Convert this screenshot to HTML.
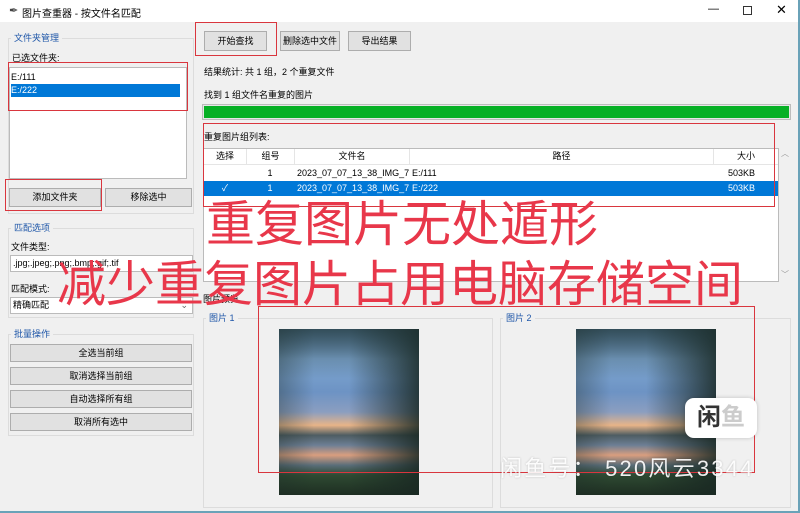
<!DOCTYPE html>
<html><head><meta charset="utf-8"><style>
*{box-sizing:border-box;margin:0;padding:0}
body{width:800px;height:513px;overflow:hidden;background:#f0f0f0;font-family:"Liberation Sans","Noto Sans CJK SC",sans-serif;font-size:9px;color:#000;position:relative}
.a{position:absolute}
.btn{position:absolute;background:#e1e1e1;border:1px solid #adadad;text-align:center;font-size:9px;line-height:17px}
.grp{position:absolute;border:1px solid #dcdcdc}
.lbl{position:absolute;color:#1e56a8;font-size:9px;background:#f0f0f0;padding:0 3px}
.red{position:absolute;border:1.5px solid #d9363e}
.img{position:absolute;width:140px;height:166px;background:
linear-gradient(180deg,#4c6f8a 0%,#7fa8d2 18%,#6d93c4 38%,#8b9ec0 50%,#e8b488 58%,#4e5d62 64%,#6d7f95 70%,#d99e7f 76%,#5b6e7a 82%,#2e4a32 88%,#1e2e22 100%);overflow:hidden}
.img:before{content:"";position:absolute;left:0;top:0;width:140px;height:166px;background:linear-gradient(90deg,rgba(30,45,40,0.35) 0%,rgba(30,45,40,0) 25%,rgba(30,45,40,0) 50%,rgba(25,40,35,0.85) 100%);}
.img:after{content:"";position:absolute;left:0;top:0;width:140px;height:166px;background:linear-gradient(180deg,rgba(30,50,50,.55) 0%,rgba(30,50,50,0) 30%)}
.big{position:absolute;color:#e8374a;font-size:49px;line-height:52px;white-space:nowrap;font-family:"Noto Sans CJK SC",sans-serif}
</style></head><body>
<div class="a" style="left:0;top:0;width:800px;height:22px;background:#fff"></div>
<div class="a" style="left:9px;top:4px;font-size:11px;color:#444">✒</div>
<div class="a" style="left:22px;top:5px;font-size:10px">图片查重器 - 按文件名匹配</div>
<div class="a" style="left:708px;top:3px;font-size:11px">—</div>
<div class="a" style="left:743px;top:6px;width:9px;height:9px;border:1px solid #333"></div>
<div class="a" style="left:776px;top:2px;font-size:13px">✕</div>
<div class="a" style="left:798px;top:0;width:2px;height:513px;background:#6aa2b8"></div>
<div class="a" style="left:0;top:511px;width:800px;height:2px;background:#6aa2b8"></div>

<div class="grp" style="left:8px;top:38px;width:186px;height:176px"></div>
<div class="lbl" style="left:11px;top:31px">文件夹管理</div>
<div class="a" style="left:12px;top:51px">已选文件夹:</div>
<div class="a" style="left:9px;top:67px;width:178px;height:112px;background:#fff;border:1px solid #bbb"></div>
<div class="a" style="left:11px;top:72px;font-size:9px">E:/111</div>
<div class="a" style="left:11px;top:84px;width:169px;height:13px;background:#0078d7;color:#fff;line-height:12px">E:/222</div>
<div class="btn" style="left:9px;top:188px;width:92px;height:19px">添加文件夹</div>
<div class="btn" style="left:105px;top:188px;width:87px;height:19px">移除选中</div>
<div class="red" style="left:8px;top:62px;width:180px;height:49px"></div>
<div class="red" style="left:5px;top:179px;width:97px;height:32px"></div>

<div class="grp" style="left:8px;top:228px;width:186px;height:90px"></div>
<div class="lbl" style="left:11px;top:221px">匹配选项</div>
<div class="a" style="left:11px;top:240px">文件类型:</div>
<div class="a" style="left:10px;top:255px;width:183px;height:17px;background:#fff;border:1px solid #bbb;line-height:15px;padding-left:2px">.jpg;.jpeg;.png;.bmp;.gif;.tif</div>
<div class="a" style="left:11px;top:282px">匹配模式:</div>
<div class="a" style="left:10px;top:297px;width:183px;height:17px;background:#fff;border:1px solid #bbb;line-height:15px;padding-left:2px">精确匹配<span style="position:absolute;right:4px;color:#666">⌄</span></div>

<div class="grp" style="left:8px;top:334px;width:186px;height:102px"></div>
<div class="lbl" style="left:11px;top:327px">批量操作</div>
<div class="btn" style="left:10px;top:344px;width:182px;height:18px">全选当前组</div>
<div class="btn" style="left:10px;top:367px;width:182px;height:18px">取消选择当前组</div>
<div class="btn" style="left:10px;top:390px;width:182px;height:18px">自动选择所有组</div>
<div class="btn" style="left:10px;top:413px;width:182px;height:18px">取消所有选中</div>

<div class="btn" style="left:204px;top:31px;width:63px;height:20px;line-height:18px">开始查找</div>
<div class="btn" style="left:280px;top:31px;width:60px;height:20px;line-height:18px">删除选中文件</div>
<div class="btn" style="left:348px;top:31px;width:63px;height:20px;line-height:18px">导出结果</div>
<div class="red" style="left:195px;top:22px;width:82px;height:34px"></div>
<div class="a" style="left:204px;top:65px">结果统计: 共 1 组，2 个重复文件</div>
<div class="a" style="left:204px;top:88px">找到 1 组文件名重复的图片</div>
<div class="a" style="left:202px;top:104px;width:589px;height:16px;background:#e6e6e6;border:1px solid #bcbcbc"></div>
<div class="a" style="left:204px;top:106px;width:585px;height:12px;background:#06b025"></div>
<div class="a" style="left:204px;top:130px">重复图片组列表:</div>

<div class="a" style="left:203px;top:148px;width:576px;height:134px;background:#fff;border:1px solid #bbb"></div>
<div class="a" style="left:779px;top:148px;width:12px;height:134px;background:#f0f0f0;color:#999;font-size:8px;text-align:center">︿<div style="position:absolute;bottom:2px;width:12px">﹀</div></div>
<div class="a" style="left:204px;top:149px;width:574px;height:16px;border-bottom:1px solid #e5e5e5;line-height:15px">
<span class="a" style="left:0;width:42px;text-align:center">选择</span>
<span class="a" style="left:42px;width:48px;text-align:center;border-left:1px solid #e5e5e5">组号</span>
<span class="a" style="left:90px;width:115px;text-align:center;border-left:1px solid #e5e5e5">文件名</span>
<span class="a" style="left:205px;width:304px;text-align:center;border-left:1px solid #e5e5e5">路径</span>
<span class="a" style="left:509px;width:65px;text-align:center;border-left:1px solid #e5e5e5">大小</span>
</div>
<div class="a" style="left:204px;top:166px;width:574px;height:15px;line-height:15px">
<span class="a" style="left:42px;width:48px;text-align:center">1</span>
<span class="a" style="left:93px">2023_07_07_13_38_IMG_7</span>
<span class="a" style="left:208px">E:/111</span>
<span class="a" style="left:524px">503KB</span></div>
<div class="a" style="left:204px;top:181px;width:574px;height:15px;line-height:15px;background:#0078d7;color:#fff">
<span class="a" style="left:0;width:42px;text-align:center">✓</span>
<span class="a" style="left:42px;width:48px;text-align:center">1</span>
<span class="a" style="left:93px">2023_07_07_13_38_IMG_7</span>
<span class="a" style="left:208px">E:/222</span>
<span class="a" style="left:524px">503KB</span></div>
<div class="red" style="left:203px;top:123px;width:572px;height:84px"></div>

<div class="a" style="left:203px;top:292px">图片预览</div>
<div class="grp" style="left:203px;top:318px;width:290px;height:190px"></div>
<div class="lbl" style="left:206px;top:311px">图片 1</div>
<div class="grp" style="left:500px;top:318px;width:291px;height:190px"></div>
<div class="lbl" style="left:503px;top:311px">图片 2</div>
<div class="img" style="left:279px;top:329px"></div>
<div class="img" style="left:576px;top:329px"></div>
<div class="red" style="left:258px;top:306px;width:497px;height:167px"></div>

<div class="big" style="left:206px;top:195px">重复图片无处遁形</div>
<div class="big" style="left:57px;top:255px">减少重复图片占用电脑存储空间</div>

<div class="a" style="left:685px;top:398px;width:72px;height:40px;background:#fff;border-radius:9px;box-shadow:0 0 4px rgba(0,0,0,.2);font-size:24px;line-height:40px;text-align:center;font-weight:bold;color:#333"><span>闲</span><span style="color:#ccc">鱼</span></div>
<div class="a" style="left:500px;top:451px;font-size:22px;letter-spacing:2.2px;color:rgba(255,255,255,.92);white-space:nowrap;text-shadow:0 0 2px rgba(0,0,0,.2)">闲鱼号： 520风云3344</div>
</body></html>
